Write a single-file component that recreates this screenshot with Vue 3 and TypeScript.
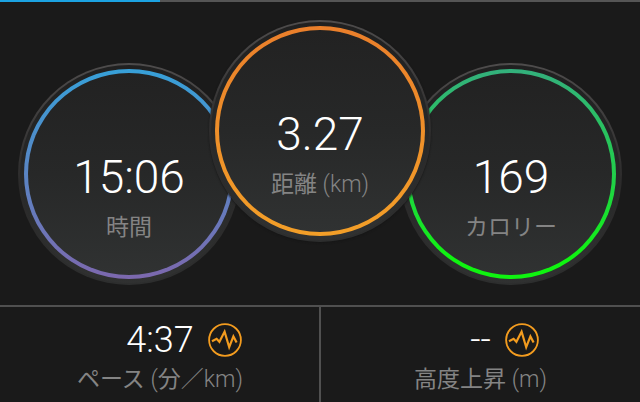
<script setup lang="ts">
interface LabelPart {
  text: string
  thin?: boolean
}

interface Reading {
  id: string
  value: string
  label: LabelPart[]
}

const dials: Reading[] = [
  { id: 'time', value: '15:06', label: [{ text: '時間' }] },
  { id: 'distance', value: '3.27', label: [{ text: '距離' }, { text: ' (km)', thin: true }] },
  { id: 'calories', value: '169', label: [{ text: 'カロリー' }] },
]

const metrics: Reading[] = [
  {
    id: 'pace',
    value: '4:37',
    label: [
      { text: 'ペース' },
      { text: ' (', thin: true },
      { text: '分' },
      { text: '／km)', thin: true },
    ],
  },
  { id: 'ascent', value: '--', label: [{ text: '高度上昇' }, { text: ' (m)', thin: true }] },
]
</script>

<template>
  <main class="screen">
    <div class="pager"><div class="pager-mark"></div></div>

    <section class="dials">
      <div v-for="dial in dials" :key="dial.id" class="rim" :class="dial.id">
        <div class="bezel">
          <div class="ring">
            <div class="face">
              <span class="dial-value">{{ dial.value }}</span>
              <span class="label"><span v-for="part in dial.label" :key="part.text" :class="{ thin: part.thin }">{{ part.text }}</span></span>
            </div>
          </div>
        </div>
      </div>
    </section>

    <section class="metrics">
      <div v-for="metric in metrics" :key="metric.id" class="metric">
        <div class="metric-top">
          <span class="metric-value">{{ metric.value }}</span>
          <svg class="chart-icon" viewBox="0 0 34 34" aria-hidden="true">
            <circle cx="17" cy="17" r="15.9" />
            <path d="M4 18.2 L8.6 15.8 L11.4 18.8 L16.6 8.6 L21.2 24.2 L25.4 13.4 L28.6 19.6" />
          </svg>
        </div>
        <span class="label"><span v-for="part in metric.label" :key="part.text" :class="{ thin: part.thin }">{{ part.text }}</span></span>
      </div>
    </section>
  </main>
</template>

<style>
body {
  margin: 0;
  background: #1a1a1a;
}
</style>

<style scoped>
.screen {
  min-height: 100vh;
  display: flex;
  flex-direction: column;
  background: #1a1a1a;
  color: #fff;
  font-family: Roboto, "Noto Sans CJK JP", sans-serif;
  font-weight: 300;
}

.pager {
  height: 2px;
  background: #555;
}

.pager-mark {
  width: 25%;
  height: 100%;
  background: #1ca3e2;
}

.dials {
  display: flex;
  justify-content: center;
  align-items: flex-end;
  padding: 18px 0 20px;
}

.rim {
  box-sizing: border-box;
  width: 222px;
  height: 222px;
  padding: 2px;
  border-radius: 50%;
  background: linear-gradient(#4e4c4c, #2b2a2a 55%, #2d2e2e);
}

.bezel {
  box-sizing: border-box;
  height: 100%;
  padding: 4px;
  border-radius: 50%;
  background: linear-gradient(#202020, #272828 50%, #303131);
}

.ring {
  box-sizing: border-box;
  height: 100%;
  padding: 4px;
  border-radius: 50%;
}

.time .ring {
  background: linear-gradient(#37a0d8, #5a85c4 50%, #7c68ae);
}

.distance {
  position: relative;
  margin: 0 -31px 43px;
  box-shadow: 0 1px 2px #161616;
}

.distance .ring {
  background: linear-gradient(#ea7f2b, #f39f28);
}

.calories .ring {
  background: linear-gradient(#33b07c, #22cf4c 50%, #0ff410 90%);
}

.face {
  box-sizing: border-box;
  height: 100%;
  padding-top: 79px;
  display: flex;
  flex-direction: column;
  align-items: center;
  gap: 12px;
  border-radius: 50%;
  background: linear-gradient(#222222, #272828 50%, #303232);
}

.dial-value {
  font-size: 46px;
  line-height: 50px;
}

.label {
  color: #848484;
  font-size: 23px;
  font-weight: 400;
  line-height: 28px;
  white-space: pre;
}

.thin {
  font-weight: 300;
}

.metrics {
  flex: 1;
  display: grid;
  grid-template-columns: 1fr 1fr;
  border-top: 2px solid #505050;
}

.metric {
  display: flex;
  flex-direction: column;
  align-items: center;
  gap: 6px;
  padding: 13px 0 8px;
}

.metric + .metric {
  border-left: 2px solid #505050;
  margin-left: -1px;
}

.metric-top {
  width: 100%;
  display: grid;
  grid-template-columns: 1fr auto 1fr;
  align-items: center;
  column-gap: 14px;
  height: 40px;
}

.metric-value {
  grid-column: 2;
  font-size: 36px;
  line-height: 40px;
}

.chart-icon {
  width: 34px;
  height: 34px;
  fill: none;
  stroke: #f39c1f;
  stroke-width: 1.8;
}

.chart-icon path {
  stroke-width: 2.2;
}
</style>
